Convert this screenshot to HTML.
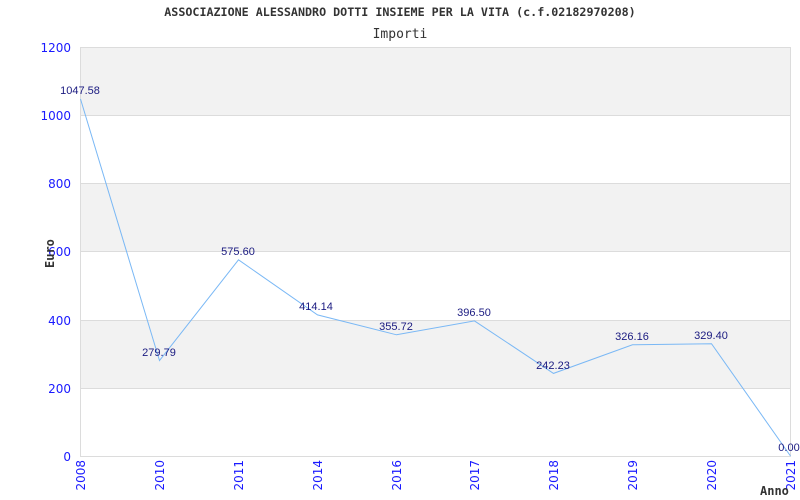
<!DOCTYPE html>
<html><head><meta charset="utf-8"><style>html,body{margin:0;padding:0;background:#fff;width:800px;height:500px;overflow:hidden}</style></head>
<body>
<svg width="800" height="500" xmlns="http://www.w3.org/2000/svg">
<rect x="0" y="0" width="800" height="500" fill="#fff"/>
<rect x="80.5" y="47" width="709.5" height="68" fill="#f2f2f2"/>
<rect x="80.5" y="183" width="709.5" height="68" fill="#f2f2f2"/>
<rect x="80.5" y="320" width="709.5" height="68" fill="#f2f2f2"/>
<g stroke="#dcdcdc" stroke-width="1">
<line x1="80.5" y1="47.5" x2="790" y2="47.5"/>
<line x1="80.5" y1="115.5" x2="790" y2="115.5"/>
<line x1="80.5" y1="183.5" x2="790" y2="183.5"/>
<line x1="80.5" y1="251.5" x2="790" y2="251.5"/>
<line x1="80.5" y1="320.5" x2="790" y2="320.5"/>
<line x1="80.5" y1="388.5" x2="790" y2="388.5"/>
<line x1="80.5" y1="456.5" x2="790" y2="456.5"/>
<line x1="80.5" y1="47" x2="80.5" y2="457"/>
<line x1="790.5" y1="47" x2="790.5" y2="457"/>
</g>
<text x="400" y="16" text-anchor="middle" font-family="DejaVu Sans Mono, monospace" font-weight="bold" font-size="11.7" fill="#333">ASSOCIAZIONE ALESSANDRO DOTTI INSIEME PER LA VITA (c.f.02182970208)</text>
<text x="400" y="38" text-anchor="middle" font-family="DejaVu Sans Mono, monospace" font-size="13" fill="#333">Importi</text>
<g font-family="DejaVu Sans, sans-serif" font-size="12" fill="#1a1aff" text-anchor="end">
<text x="71" y="52">1200</text>
<text x="71" y="120">1000</text>
<text x="71" y="188">800</text>
<text x="71" y="256">600</text>
<text x="71" y="325">400</text>
<text x="71" y="393">200</text>
<text x="71" y="461">0</text>
</g>
<g font-family="DejaVu Sans, sans-serif" font-size="12" fill="#1a1aff" text-anchor="end">
<text transform="translate(85,460) rotate(-90)">2008</text>
<text transform="translate(164,460) rotate(-90)">2010</text>
<text transform="translate(243,460) rotate(-90)">2011</text>
<text transform="translate(322,460) rotate(-90)">2014</text>
<text transform="translate(401,460) rotate(-90)">2016</text>
<text transform="translate(479,460) rotate(-90)">2017</text>
<text transform="translate(558,460) rotate(-90)">2018</text>
<text transform="translate(637,460) rotate(-90)">2019</text>
<text transform="translate(716,460) rotate(-90)">2020</text>
<text transform="translate(795,460) rotate(-90)">2021</text>
</g>
<text transform="translate(54,268) rotate(-90)" font-family="DejaVu Sans Mono, monospace" font-weight="bold" font-size="12" fill="#333">Euro</text>
<text x="760" y="495" font-family="DejaVu Sans Mono, monospace" font-weight="bold" font-size="12" fill="#333">Anno</text>
<polyline fill="none" stroke="#7ab8f5" stroke-width="1" points="80.5,99 159.5,360.6 238.5,259.8 317.5,314.9 396.5,334.8 474.5,320.9 553.5,373.4 632.5,344.8 711.5,343.7 790.5,456"/>
<g font-family="Liberation Sans, sans-serif" font-size="11" fill="#1a1a80" text-anchor="middle">
<text x="80" y="94">1047.58</text>
<text x="159" y="356">279.79</text>
<text x="238" y="255">575.60</text>
<text x="316" y="310">414.14</text>
<text x="396" y="330">355.72</text>
<text x="474" y="316">396.50</text>
<text x="553" y="369">242.23</text>
<text x="632" y="340">326.16</text>
<text x="711" y="339">329.40</text>
<text x="789" y="451">0.00</text>
</g>
</svg>
</body></html>
